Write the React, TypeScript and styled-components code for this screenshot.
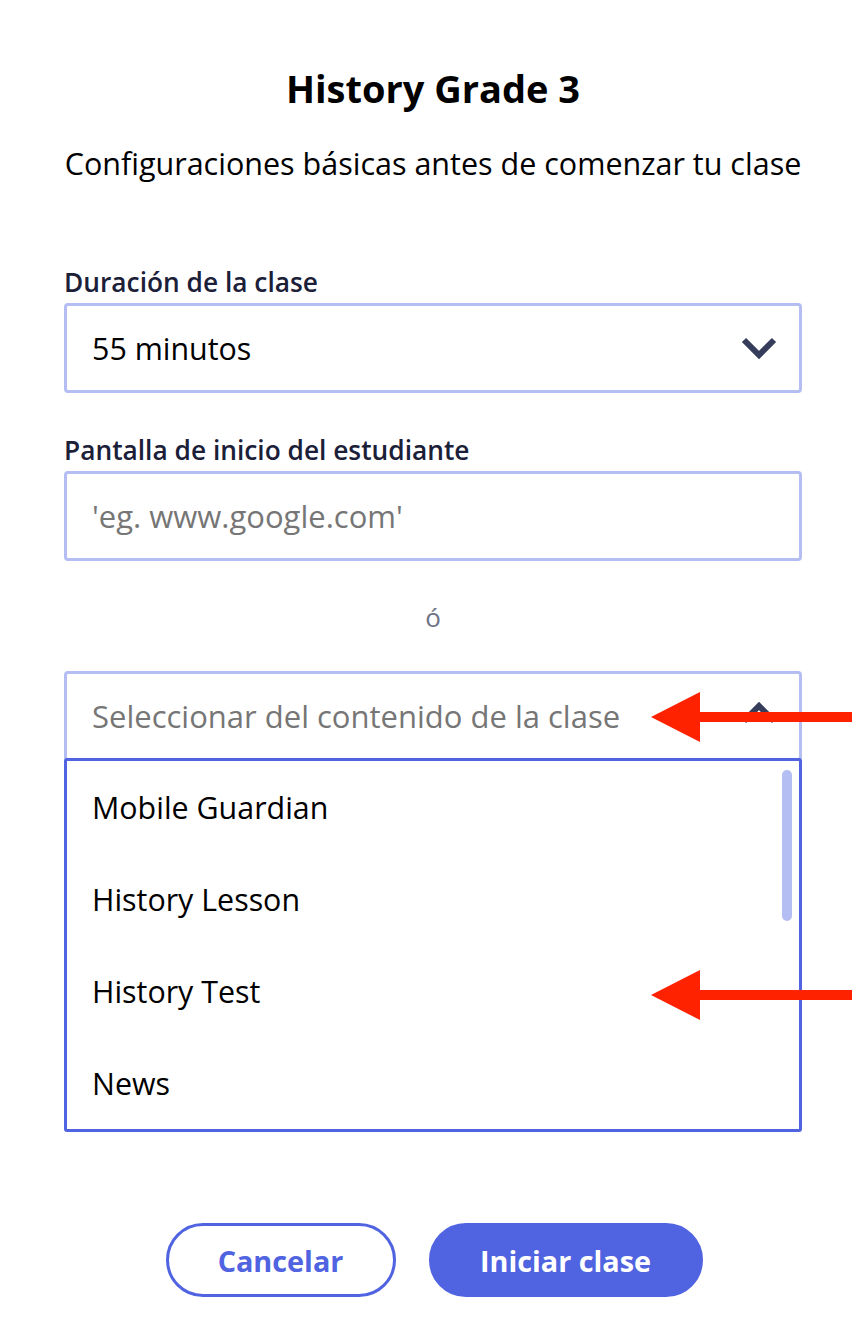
import React from "react";
import styled, { createGlobalStyle } from "styled-components";

const Global = createGlobalStyle`
  html, body { margin: 0; padding: 0; background: #ffffff; }
  body { font-family: "Open Sans", "Noto Sans", sans-serif; }
  * { box-sizing: border-box; }
`;

const PRIMARY = "#5063e0";
const SOFT = "#b5bef2";

const Page = styled.div`
  position: relative;
  width: 852px;
  height: 1340px;
  padding: 66px 50px 0 64px;
  overflow: hidden;
  display: flex;
  flex-direction: column;
`;

const Title = styled.h1`
  margin: 0;
  font-size: 38px;
  line-height: 44px;
  font-weight: 700;
  color: #000;
  text-align: center;
`;

const Subtitle = styled.p`
  margin: 35px 0 0;
  font-size: 30.5px;
  line-height: 36px;
  color: #000;
  text-align: center;
  white-space: nowrap;
`;

const Field = styled.div<{ $gap: number }>`
  display: flex;
  flex-direction: column;
  gap: 6px;
  margin-top: ${(p) => p.$gap}px;
`;

const Label = styled.label`
  font-size: 26.3px;
  line-height: 30px;
  font-weight: 600;
  color: #1b2038;
`;

const Box = styled.div`
  height: 90px;
  border: 3px solid ${SOFT};
  border-radius: 4px;
  display: flex;
  align-items: center;
  justify-content: space-between;
  padding: 0 22px 0 25px;
  background: #fff;
`;

const Value = styled.span<{ $muted?: boolean }>`
  font-size: ${(p) => (p.$muted ? 31 : 30.4)}px;
  color: ${(p) => (p.$muted ? "#767676" : "#000")};
`;

const Or = styled.div`
  margin-top: 41px;
  text-align: center;
  font-size: 26px;
  line-height: 30px;
  color: #6e7385;
`;

const SelectWrap = styled.div`
  margin-top: 39px;
  display: flex;
  flex-direction: column;
`;

const List = styled.ul`
  position: relative;
  margin: -3px 0 0;
  padding: 0;
  list-style: none;
  border: 3px solid ${PRIMARY};
  border-radius: 3px;
  background: #fff;
`;

const Item = styled.li`
  height: 92px;
  display: flex;
  align-items: center;
  padding-left: 25px;
  font-size: 30.4px;
  color: #000;
`;

const Thumb = styled.div`
  position: absolute;
  top: 9px;
  right: 7px;
  width: 10px;
  height: 151px;
  border-radius: 5px;
  background: ${SOFT};
`;

const Actions = styled.div`
  margin-top: 91px;
  display: flex;
  justify-content: center;
  gap: 33px;
  padding-left: 2px;
`;

const Button = styled.button<{ $primary?: boolean; $w: number }>`
  width: ${(p) => p.$w}px;
  height: 74px;
  border-radius: 37px;
  border: 3px solid ${PRIMARY};
  background: ${(p) => (p.$primary ? PRIMARY : "#fff")};
  color: ${(p) => (p.$primary ? "#fff" : PRIMARY)};
  font-family: inherit;
  font-size: 28.8px;
  font-weight: 700;
  cursor: pointer;
`;

const ArrowBox = styled.div<{ $top: number }>`
  position: absolute;
  left: 651px;
  top: ${(p) => p.$top}px;
  width: 201px;
  height: 50px;
  pointer-events: none;
`;

const Chevron = ({ up }: { up?: boolean }) => (
  <svg width="36" height="24" viewBox="0 0 36 24" style={{ transform: up ? "rotate(180deg)" : undefined, marginTop: up ? -6 : 0 }}>
    <path d="M3 4 L18 19 L33 4" fill="none" stroke="#353d5a" strokeWidth="6" strokeLinejoin="miter" />
  </svg>
);

const Arrow = ({ top }: { top: number }) => (
  <ArrowBox $top={top}>
    <svg width="201" height="50" viewBox="0 0 201 50">
      <polygon points="0,25 49,0 49,50" fill="#ff2200" />
      <rect x="48" y="20" width="153" height="10" fill="#ff2200" />
    </svg>
  </ArrowBox>
);

export default function App() {
  return (
    <>
      <Global />
      <Page>
        <Title>History Grade 3</Title>
        <Subtitle>Configuraciones básicas antes de comenzar tu clase</Subtitle>

        <Field $gap={86}>
          <Label>Duración de la clase</Label>
          <Box>
            <Value>55 minutos</Value>
            <Chevron />
          </Box>
        </Field>

        <Field $gap={42}>
          <Label>Pantalla de inicio del estudiante</Label>
          <Box>
            <Value $muted>'eg. www.google.com'</Value>
          </Box>
        </Field>

        <Or>ó</Or>

        <SelectWrap>
          <Box>
            <Value $muted>Seleccionar del contenido de la clase</Value>
            <Chevron up />
          </Box>
          <List>
            <Item>Mobile Guardian</Item>
            <Item>History Lesson</Item>
            <Item>History Test</Item>
            <Item>News</Item>
            <Thumb />
          </List>
        </SelectWrap>

        <Actions>
          <Button $w={230}>Cancelar</Button>
          <Button $w={274} $primary>Iniciar clase</Button>
        </Actions>

        <Arrow top={692} />
        <Arrow top={970} />
      </Page>
    </>
  );
}
